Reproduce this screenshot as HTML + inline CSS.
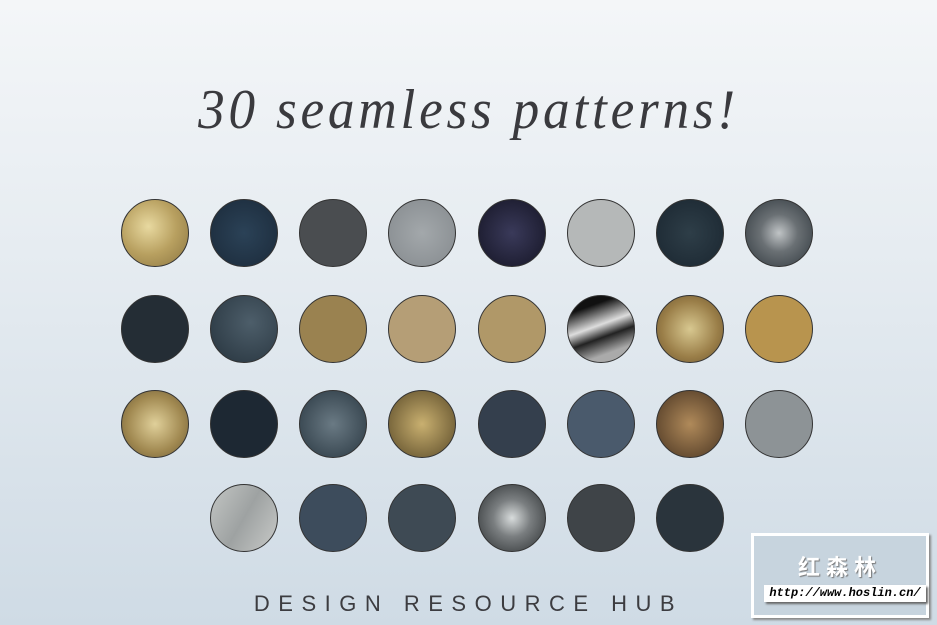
<!DOCTYPE html>
<html><head><meta charset="utf-8"><style>
html,body{margin:0;padding:0}
body{width:937px;height:625px;overflow:hidden;position:relative;background:linear-gradient(180deg,#f4f6f8 0%,#e6ecf1 40%,#cfdbe5 100%);font-family:"Liberation Sans",sans-serif}
.c{position:absolute;width:68px;height:68px;border-radius:50%;border:1px solid #333;box-sizing:border-box}
.t{position:absolute;left:0;width:937px;top:78px;text-align:center;font-family:"Liberation Serif",serif;font-style:italic;font-size:56px;color:#3a3a3e;letter-spacing:4px;transform:scaleX(0.95)}
.b{position:absolute;left:0;width:937px;top:591px;text-align:center;font-size:22px;letter-spacing:8.5px;color:#3c3c40}
.wm{position:absolute;left:751px;top:533px;width:178px;height:85px;border:3px solid #fff;box-sizing:border-box;background:#c7d4de;box-shadow:2px 2px 2px #888}
.wm .cn{position:absolute;top:14px;left:0;width:100%;text-align:center;font-family:"Noto Sans CJK SC",sans-serif;font-weight:bold;font-size:22px;color:#fff;letter-spacing:6px;text-shadow:1px 1px 1px #777}
.wm .u{position:absolute;left:10px;top:49px;width:162px;height:17px;background:#fff;font-family:"Liberation Mono",monospace;font-style:italic;font-weight:bold;font-size:12px;line-height:17px;text-align:center;color:#000;box-shadow:2px 2px 2px #666}
</style></head><body>
<div class="t">30 seamless patterns!</div>
<div class="c" style="left:121px;top:199px;background:radial-gradient(circle at 40% 40%,#e8d9a0,#b8a060 50%,#8a7440)"></div>
<div class="c" style="left:210px;top:199px;background:radial-gradient(circle,#2b4257,#1b2a3a)"></div>
<div class="c" style="left:299px;top:199px;background:#4a4d50"></div>
<div class="c" style="left:388px;top:199px;background:radial-gradient(circle,#a3a8ab,#858a8e)"></div>
<div class="c" style="left:478px;top:199px;background:radial-gradient(circle,#3a3a5a,#151525)"></div>
<div class="c" style="left:567px;top:199px;background:#b5b8b8"></div>
<div class="c" style="left:656px;top:199px;background:radial-gradient(circle,#2e3e48,#1a2630)"></div>
<div class="c" style="left:745px;top:199px;background:radial-gradient(circle,#c0c4c6,#6a7074 40%,#30383e)"></div>

<div class="c" style="left:121px;top:295px;background:#242d35"></div>
<div class="c" style="left:210px;top:295px;background:radial-gradient(circle at 60% 40%,#4d5e6a,#26333d)"></div>
<div class="c" style="left:299px;top:295px;background:#9a8250"></div>
<div class="c" style="left:388px;top:295px;background:#b59e76"></div>
<div class="c" style="left:478px;top:295px;background:#b09868"></div>
<div class="c" style="left:567px;top:295px;background:linear-gradient(160deg,#111 20%,#ddd 45%,#222 60%,#aaa 80%)"></div>
<div class="c" style="left:656px;top:295px;background:radial-gradient(circle,#d8c890,#9a7e48 60%,#6a5530)"></div>
<div class="c" style="left:745px;top:295px;background:#b8944e"></div>

<div class="c" style="left:121px;top:390px;background:radial-gradient(circle,#e0d09a,#a08850 60%,#6a5a38)"></div>
<div class="c" style="left:210px;top:390px;background:#1d2833"></div>
<div class="c" style="left:299px;top:390px;background:radial-gradient(circle,#6a7a84,#2a3842)"></div>
<div class="c" style="left:388px;top:390px;background:radial-gradient(circle,#c9b070,#5a4a28)"></div>
<div class="c" style="left:478px;top:390px;background:#343f4d"></div>
<div class="c" style="left:567px;top:390px;background:#4a5a6c"></div>
<div class="c" style="left:656px;top:390px;background:radial-gradient(circle,#b08a5a,#4a3522)"></div>
<div class="c" style="left:745px;top:390px;background:#8d9396"></div>

<div class="c" style="left:210px;top:484px;background:linear-gradient(120deg,#c3c6c4,#9ea2a2 50%,#c8cac8)"></div>
<div class="c" style="left:299px;top:484px;background:#3d4c5c"></div>
<div class="c" style="left:388px;top:484px;background:#3e4a54"></div>
<div class="c" style="left:478px;top:484px;background:radial-gradient(circle,#d8dcdc,#7a7e80 40%,#2a2e30)"></div>
<div class="c" style="left:567px;top:484px;background:#3f4448"></div>
<div class="c" style="left:656px;top:484px;background:#2a343c"></div>

<div class="b">DESIGN RESOURCE HUB</div>
<div class="wm"><div class="cn">红森林</div><div class="u">http://www.hoslin.cn/</div></div>
</body></html>
